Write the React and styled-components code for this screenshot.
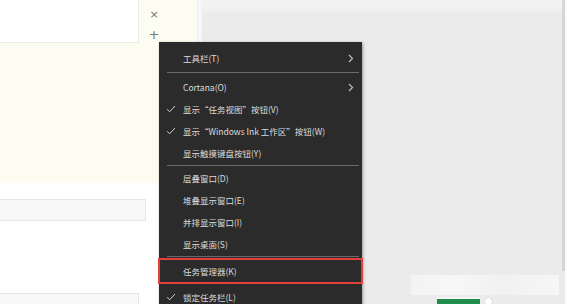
import React from "react";
import styled, { createGlobalStyle } from "styled-components";

const Global = createGlobalStyle`
  html, body { margin: 0; padding: 0; }
  body { width: 567px; height: 304px; overflow: hidden; font-family: "Noto Sans CJK SC", "Noto Sans", sans-serif; }
`;

const Page = styled.div`
  position: relative;
  width: 567px;
  height: 304px;
  display: grid;
  grid-template-columns: 197px 5px 1fr;
  overflow: hidden;
`;

const LeftPane = styled.div`
  display: flex;
  flex-direction: column;
  background: #ffffff;
`;

const CreamArea = styled.div`
  height: 183px;
  background: #fdfcf1;
  display: flex;
  align-items: flex-start;
`;

const NoteCard = styled.div`
  width: 139px;
  height: 43px;
  background: #ffffff;
  border-right: 1px solid #ebebe4;
  border-bottom: 1px solid #ebebe4;
  box-sizing: border-box;
`;

const IconCol = styled.div`
  display: flex;
  flex-direction: column;
  align-items: center;
  gap: 7px;
  width: 30px;
  padding-top: 8px;
`;

const IconBtn = styled.span`
  font-family: "DejaVu Sans", sans-serif;
  font-size: ${p => p.$size}px;
  line-height: 13px;
  color: #777;
`;

const WhiteArea = styled.div`
  flex: 1;
  display: flex;
  flex-direction: column;
  padding-top: 16px;
  gap: 72px;
`;

const Field = styled.div`
  width: ${p => p.$w}px;
  height: 22px;
  background: #f8f8f8;
  border: 1px solid #e6e6e6;
  border-left: none;
  box-sizing: border-box;
`;

const Divider = styled.div`
  background: #f6f6f8;
  border-left: 1px solid #f0f0ee;
`;

const RightPane = styled.div`
  background: #ebebeb;
  display: flex;
  flex-direction: column;
  border-right: 2px solid #fafafa;
`;

const RightInner = styled.div`
  flex: 1;
  display: flex;
  flex-direction: column;
  border-right: 3px solid #d6d6d6;
  background: linear-gradient(#f2f2f3 0, #f2f2f3 8px, #ebebeb 14px);
`;

const RightBottom = styled.div`
  height: 40px;
  background: #ebebeb;
  display: flex;
  flex-direction: column;
  align-items: flex-end;
  padding-top: 4px;
`;

const Blur = styled.div`
  width: 148px;
  height: 20px;
  margin-right: 6px;
  background: linear-gradient(90deg, #f3f3f3, #f7f7f7 30%, #f1f1f1 60%, #f6f6f6);
`;

const StatusRow = styled.div`
  align-self: flex-start;
  margin-left: 235px;
  display: flex;
  align-items: flex-start;
  gap: 4px;
  margin-top: 2px;
`;

const GreenBtn = styled.div`
  width: 43px;
  height: 14px;
  background: #1f8d4d;
  border-top: 2px solid #f2f8f3;
`;

const Dot = styled.div`
  width: 7px;
  height: 7px;
  border-radius: 50%;
  background: #ffffff;
  border: 1px solid #dcdcdc;
`;

const Menu = styled.div`
  position: absolute;
  left: 159px;
  top: 42px;
  width: 203px;
  height: 270px;
  background: #2b2b2b;
  box-shadow: 1px 1px 3px rgba(0,0,0,0.35);
  padding-top: 5px;
  box-sizing: border-box;
  display: flex;
  flex-direction: column;
`;

const Item = styled.div`
  position: relative;
  flex: none;
  height: ${p => p.$h || 22}px;
  display: flex;
  align-items: center;
  padding-left: 24px;
  font-size: 8.5px;
  color: #dcdcdc;
  white-space: nowrap;
  box-sizing: border-box;
  ${p => p.$hl ? "border: 2px solid #e2413b; margin: 0 -1px 0 -1px; padding-left: 23px;" : ""}
`;

const Check = styled.svg`
  position: absolute;
  left: 7px;
  top: 50%;
  margin-top: -4px;
`;

const Chevron = styled.svg`
  position: absolute;
  right: 8px;
  top: 50%;
  margin-top: -4px;
`;

const Sep = styled.div`
  flex: none;
  height: 1px;
  margin: ${p => p.$tight ? "1px 3px 1px 8px" : "3px 3px 3px 8px"};
  background: #6a6a6a;
`;

const CheckIcon = () => (
  <Check width="10" height="8" viewBox="0 0 10 8">
    <path d="M1 4.2 L3.6 6.8 L9 1" fill="none" stroke="#cfcfcf" strokeWidth="1" />
  </Check>
);

const ChevronIcon = () => (
  <Chevron width="6" height="9" viewBox="0 0 6 9">
    <path d="M1 1 L4.5 4.5 L1 8" fill="none" stroke="#bdbdbd" strokeWidth="1.2" />
  </Chevron>
);

export default function App() {
  return (
    <>
      <Global />
      <Page>
        <LeftPane>
          <CreamArea>
            <NoteCard />
            <IconCol>
              <IconBtn $size={11}>×</IconBtn>
              <IconBtn $size={13}>+</IconBtn>
            </IconCol>
          </CreamArea>
          <WhiteArea>
            <Field $w={146} />
            <Field $w={139} />
          </WhiteArea>
        </LeftPane>
        <Divider />
        <RightPane>
          <RightInner />
          <RightBottom>
            <Blur />
            <StatusRow>
              <GreenBtn />
              <Dot />
            </StatusRow>
          </RightBottom>
        </RightPane>
        <Menu>
          <Item>工具栏(T)<ChevronIcon /></Item>
          <Sep />
          <Item>Cortana(O)<ChevronIcon /></Item>
          <Item><CheckIcon />显示“任务视图”按钮(V)</Item>
          <Item><CheckIcon />显示“Windows Ink 工作区”按钮(W)</Item>
          <Item>显示触摸键盘按钮(Y)</Item>
          <Sep $tight />
          <Item>层叠窗口(D)</Item>
          <Item>堆叠显示窗口(E)</Item>
          <Item>并排显示窗口(I)</Item>
          <Item>显示桌面(S)</Item>
          <Sep $tight />
          <Item $hl $h={26}>任务管理器(K)</Item>
          <Item $h={26}><CheckIcon />锁定任务栏(L)</Item>
        </Menu>
      </Page>
    </>
  );
}
